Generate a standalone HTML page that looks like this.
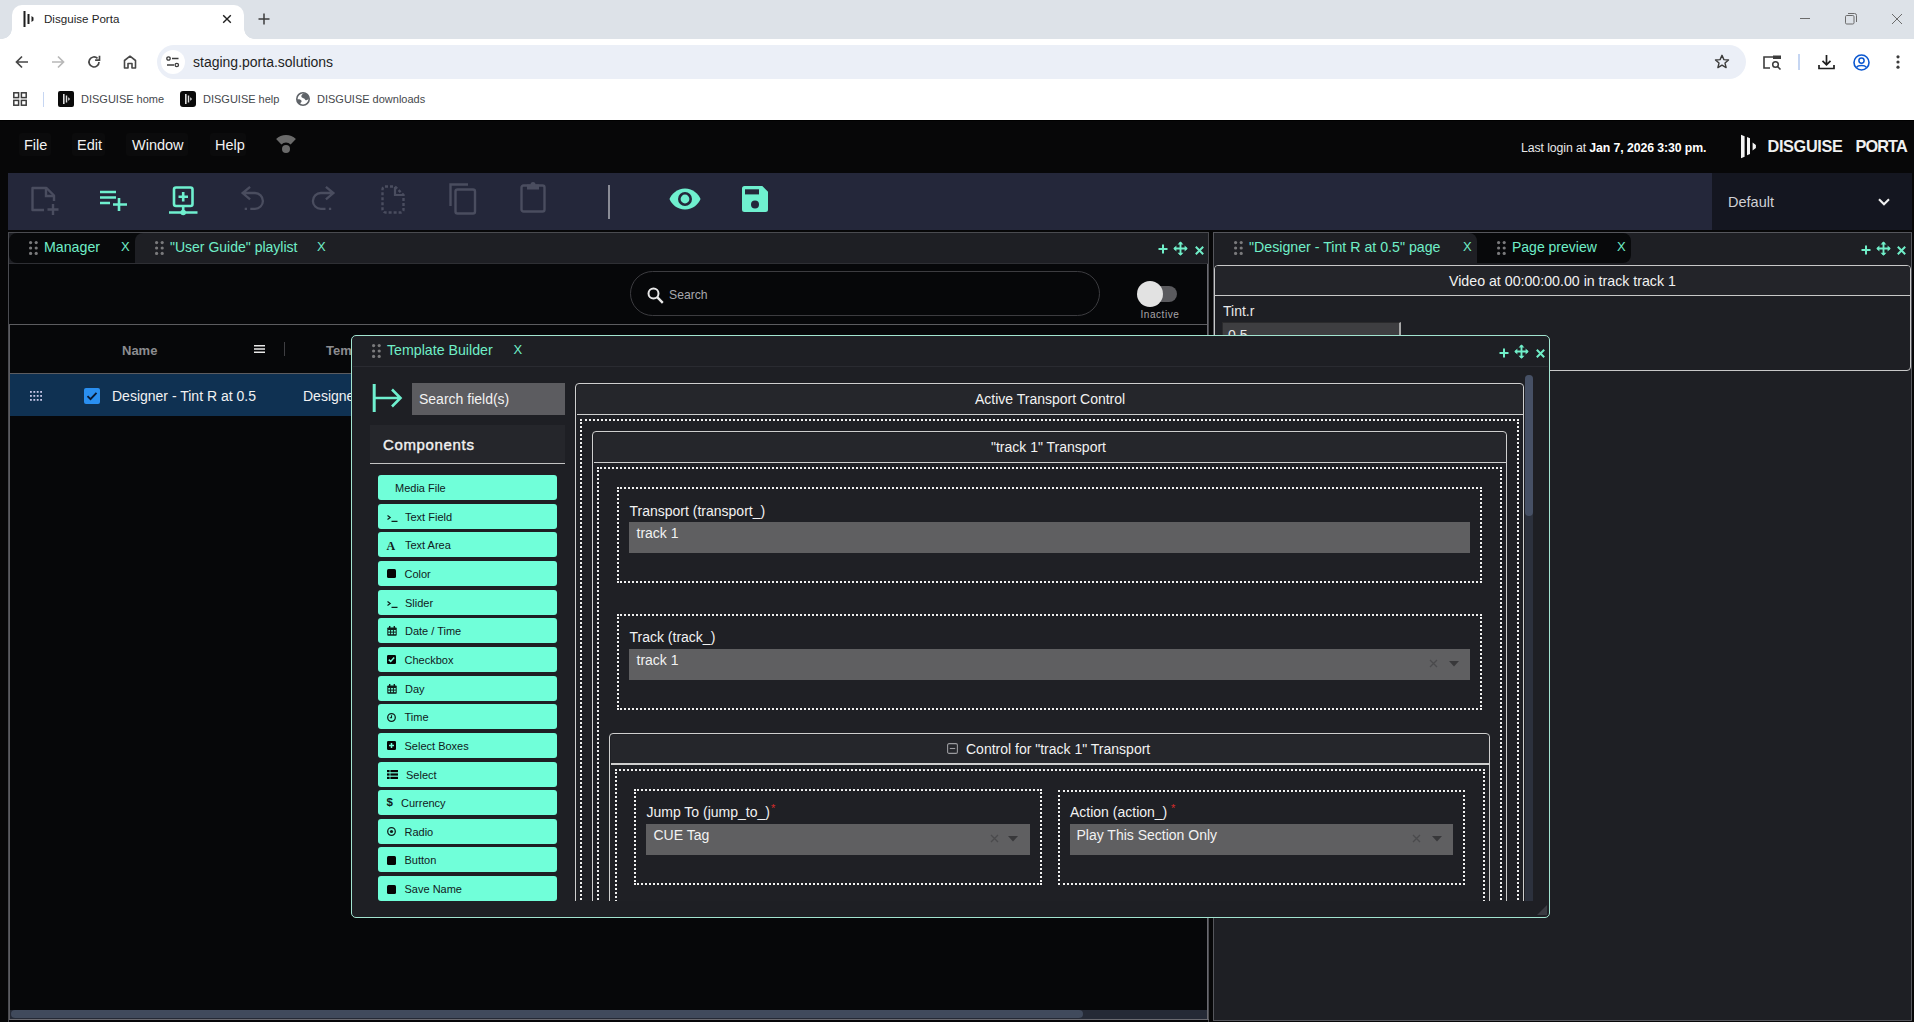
<!DOCTYPE html>
<html><head><meta charset="utf-8">
<style>
*{box-sizing:border-box;margin:0;padding:0}
html,body{width:1914px;height:1022px;overflow:hidden;background:#060709;font-family:"Liberation Sans",sans-serif}
.a{position:absolute}
.t{position:absolute;white-space:nowrap;line-height:1}
svg{position:absolute;overflow:visible}
</style></head><body>
<!-- ============ CHROME ============ -->
<div class="a" style="left:0;top:0;width:1914px;height:39px;background:#dde2e8"></div>
<div class="a" style="left:12px;top:5px;width:232px;height:35px;background:#fff;border-radius:10px 10px 0 0"></div>
<div class="a" style="left:0;top:39px;width:1914px;height:81px;background:#fff"></div>

<!-- tab foot curves -->
<div class="a" style="left:2px;top:29px;width:10px;height:10px;background:radial-gradient(circle at 0 0,#dde2e8 9.5px,#fff 10px)"></div>
<div class="a" style="left:244px;top:29px;width:10px;height:10px;background:radial-gradient(circle at 100% 0,#dde2e8 9.5px,#fff 10px)"></div>

<!-- tab icon -->
<svg style="left:23px;top:11px" width="12" height="16" viewBox="0 0 12 16"><rect x="0.5" y="0" width="2" height="16" fill="#1f1f1f"/><rect x="4.5" y="3" width="2" height="10" fill="#1f1f1f"/><path d="M8.5 5 L10.5 6.5 V9.5 L8.5 11 Z" fill="#1f1f1f"/></svg>
<div class="t" style="left:44px;top:13px;font-size:11.6px;color:#1f1f1f">Disguise Porta</div>
<svg style="left:222px;top:14px" width="10" height="10" viewBox="0 0 10 10"><path d="M1.2 1.2L8.8 8.8M8.8 1.2L1.2 8.8" stroke="#1f1f1f" stroke-width="1.4"/></svg>
<svg style="left:258px;top:13px" width="12" height="12" viewBox="0 0 12 12"><path d="M6 0.5V11.5M0.5 6H11.5" stroke="#3c3c3c" stroke-width="1.5"/></svg>
<!-- window controls -->
<div class="a" style="left:1800px;top:18px;width:10px;height:1px;background:#6b6b6b"></div>
<svg style="left:1845px;top:13px" width="12" height="12" viewBox="0 0 12 12"><rect x="0.5" y="2.5" width="8.5" height="8.5" rx="1.2" fill="none" stroke="#6b6b6b" stroke-width="1"/><path d="M3 0.5H9.5a2 2 0 0 1 2 2V9" fill="none" stroke="#6b6b6b" stroke-width="1"/></svg>
<svg style="left:1892px;top:14px" width="10" height="10" viewBox="0 0 10 10"><path d="M0 0L10 10M10 0L0 10" stroke="#6b6b6b" stroke-width="1"/></svg>
<!-- nav -->
<svg style="left:15px;top:55px" width="14" height="14" viewBox="0 0 14 14"><path d="M13 7H2M7 1.5L1.5 7L7 12.5" fill="none" stroke="#474747" stroke-width="1.7"/></svg>
<svg style="left:51px;top:55px" width="14" height="14" viewBox="0 0 14 14"><path d="M1 7H12M7 1.5L12.5 7L7 12.5" fill="none" stroke="#b8b8b8" stroke-width="1.7"/></svg>
<svg style="left:87px;top:55px" width="14" height="14" viewBox="0 0 14 14"><path d="M12 7A5 5 0 1 1 10.5 3.4" fill="none" stroke="#474747" stroke-width="1.7"/><path d="M12.5 0.8V5.2H8.1" fill="none" stroke="#474747" stroke-width="1.7"/></svg>
<svg style="left:123px;top:55px" width="14" height="14" viewBox="0 0 14 14"><path d="M1.5 13V5.5L7 1.2L12.5 5.5V13H9V8.5H5V13Z" fill="none" stroke="#474747" stroke-width="1.6" stroke-linejoin="round"/></svg>
<!-- omnibox -->
<div class="a" style="left:157px;top:45px;width:1589px;height:34px;background:#ebeff7;border-radius:17px"></div>
<div class="a" style="left:161px;top:50px;width:24px;height:24px;background:#fff;border-radius:12px"></div>
<svg style="left:166px;top:56px" width="14" height="12" viewBox="0 0 14 12"><circle cx="2.5" cy="2.5" r="1.7" fill="none" stroke="#3c3c3c" stroke-width="1.3"/><path d="M6 2.5H12.5M1 9H8" stroke="#3c3c3c" stroke-width="1.3"/><circle cx="10.8" cy="9" r="1.7" fill="none" stroke="#3c3c3c" stroke-width="1.3"/></svg>
<div class="t" style="left:193px;top:55px;font-size:14px;color:#1f1f1f">staging.porta.solutions</div>
<svg style="left:1714px;top:54px" width="16" height="16" viewBox="0 0 16 16"><path d="M8 1.3L9.9 5.6L14.5 6L11 9.1L12.1 13.6L8 11.2L3.9 13.6L5 9.1L1.5 6L6.1 5.6Z" fill="none" stroke="#3c3c3c" stroke-width="1.4" stroke-linejoin="round"/></svg>
<!-- right icons -->
<svg style="left:1763px;top:55px" width="19" height="15" viewBox="0 0 19 15"><path d="M10 2H1V13H7" fill="none" stroke="#3c3c3c" stroke-width="1.6"/><rect x="10" y="0.5" width="8" height="3.5" fill="#3c3c3c"/><circle cx="12.5" cy="9.5" r="2.8" fill="none" stroke="#3c3c3c" stroke-width="1.5"/><path d="M14.5 11.5L17.5 14.5" stroke="#3c3c3c" stroke-width="1.6"/></svg>
<div class="a" style="left:1798px;top:54px;width:2px;height:16px;background:#c6d6f2"></div>
<svg style="left:1818px;top:54px" width="17" height="16" viewBox="0 0 17 16"><path d="M8.5 1V10.5M4.5 6.8L8.5 10.8L12.5 6.8" fill="none" stroke="#1f1f1f" stroke-width="1.7"/><path d="M1 11V14.5H16V11" fill="none" stroke="#1f1f1f" stroke-width="1.7"/></svg>
<svg style="left:1853px;top:54px" width="17" height="17" viewBox="0 0 17 17"><circle cx="8.5" cy="8.5" r="7.5" fill="none" stroke="#0b57d0" stroke-width="1.6"/><circle cx="8.5" cy="6.6" r="2.6" fill="none" stroke="#0b57d0" stroke-width="1.5"/><path d="M3.6 13.4C5.2 11 11.8 11 13.4 13.4" fill="none" stroke="#0b57d0" stroke-width="1.5"/></svg>
<svg style="left:1896px;top:55px" width="4" height="14" viewBox="0 0 4 14"><circle cx="2" cy="1.8" r="1.6" fill="#3c3c3c"/><circle cx="2" cy="7" r="1.6" fill="#3c3c3c"/><circle cx="2" cy="12.2" r="1.6" fill="#3c3c3c"/></svg>
<!-- bookmarks -->
<svg style="left:13px;top:92px" width="14" height="14" viewBox="0 0 14 14"><rect x="0.8" y="0.8" width="4.8" height="4.8" fill="none" stroke="#3c3c3c" stroke-width="1.5"/><rect x="8.4" y="0.8" width="4.8" height="4.8" fill="none" stroke="#3c3c3c" stroke-width="1.5"/><rect x="0.8" y="8.4" width="4.8" height="4.8" fill="none" stroke="#3c3c3c" stroke-width="1.5"/><rect x="8.4" y="8.4" width="4.8" height="4.8" fill="none" stroke="#3c3c3c" stroke-width="1.5"/></svg>
<div class="a" style="left:43px;top:92px;width:1px;height:15px;background:#c6d6f2"></div>
<div class="a" style="left:58px;top:91px;width:16px;height:16px;background:#0a0a0a;border-radius:2px"></div>
<svg style="left:58px;top:91px" width="16" height="16" viewBox="0 0 16 16"><rect x="5" y="3" width="1.6" height="10" fill="#ddd"/><rect x="7.8" y="4.5" width="1.4" height="7" fill="#ddd"/><path d="M10.2 6.2L11.6 7.2V8.8L10.2 9.8Z" fill="#ddd"/></svg>
<div class="t" style="left:81px;top:93.5px;font-size:11px;color:#45484c">DISGUISE home</div>
<div class="a" style="left:180px;top:91px;width:16px;height:16px;background:#0a0a0a;border-radius:3px"></div>
<svg style="left:180px;top:91px" width="16" height="16" viewBox="0 0 16 16"><rect x="5" y="3" width="1.6" height="10" fill="#ddd"/><rect x="7.8" y="4.5" width="1.4" height="7" fill="#ddd"/><path d="M10.2 6.2L11.6 7.2V8.8L10.2 9.8Z" fill="#ddd"/></svg>
<div class="t" style="left:203px;top:93.5px;font-size:11px;color:#45484c">DISGUISE help</div>
<svg style="left:296px;top:92px" width="14" height="14" viewBox="0 0 14 14"><circle cx="7" cy="7" r="6.2" fill="none" stroke="#5f6368" stroke-width="1.6"/><path d="M7.5 1.2C5.8 2.2 4.8 4 5.6 5.2C6.5 6.4 8.2 5.8 9 7.4C9.6 8.4 10.6 8.6 11.6 7.8L13 6.2A6.2 6.2 0 0 0 7.5 1.2Z" fill="#5f6368"/><path d="M1 7.4C2.6 7 4.4 7.3 5.4 8.6C6 9.6 5.2 10.6 4.2 11.2L4.6 12.8A6.2 6.2 0 0 1 1 7.4Z" fill="#5f6368"/></svg>
<div class="t" style="left:317px;top:93.5px;font-size:11px;color:#45484c">DISGUISE downloads</div>

<!-- ============ APP ============ -->
<div class="a" style="left:0;top:120px;width:1914px;height:902px;background:#070708"></div><div class="a" style="left:0;top:120px;width:1914px;height:1px;background:#000"></div>
<!-- menu -->
<div class="a" style="left:19px;top:133px;width:32px;height:23px;border-radius:3px;background:#0b0b0c"></div>
<div class="a" style="left:72px;top:133px;width:33px;height:23px;border-radius:3px;background:#0b0b0c"></div>
<div class="a" style="left:126px;top:133px;width:62px;height:23px;border-radius:3px;background:#0b0b0c"></div>
<div class="a" style="left:210px;top:133px;width:36px;height:23px;border-radius:3px;background:#0b0b0c"></div>
<div class="t" style="left:24px;top:138px;font-size:14.5px;color:#f2f2f2">File</div>
<div class="t" style="left:77px;top:138px;font-size:14.5px;color:#f2f2f2">Edit</div>
<div class="t" style="left:132px;top:138px;font-size:14.5px;color:#f2f2f2">Window</div>
<div class="t" style="left:215px;top:138px;font-size:14.5px;color:#f2f2f2">Help</div>
<svg style="left:276px;top:134px" width="20" height="20" viewBox="0 0 20 20"><path d="M0.1 5.1A14 14 0 0 1 19.9 5.1L14.6 10.4A6.5 6.5 0 0 0 5.4 10.4Z" fill="#6a6a6a"/><circle cx="10" cy="15" r="4" fill="#6a6a6a"/></svg>
<div class="t" style="left:1521px;top:141.6px;font-size:12.3px;color:#e8e8e8;letter-spacing:-0.1px">Last login at <b style="color:#fff">Jan 7, 2026 3:30 pm.</b></div>
<svg style="left:1740px;top:134px" width="17" height="24" viewBox="0 0 17 24"><path d="M1 0.8L4.6 2.2V22.8L1 24.2Z M7 3L10 4.3V19.9L7 21.2Z M12.6 8.4L15.9 11V13.9L12.6 16.6Z" fill="#f2f2f2"/></svg>
<div class="t" style="left:1767.5px;top:138px;font-size:16.3px;font-weight:700;color:#f0f0f0;letter-spacing:-0.35px">DISGUISE</div>
<div class="t" style="left:1855.5px;top:138px;font-size:16.3px;font-weight:700;color:#f0f0f0;letter-spacing:-0.9px">PORTA</div>

<!-- toolbar -->
<div class="a" style="left:8px;top:173px;width:1704px;height:57px;background:#24273a"></div>
<div class="a" style="left:1712px;top:173px;width:200px;height:57px;background:#141620"></div>
<div class="t" style="left:1728px;top:195px;font-size:14.5px;color:#d0d0d4">Default</div>
<svg style="left:1878px;top:198px" width="12" height="8" viewBox="0 0 12 8"><path d="M1 1.2L6 6.2L11 1.2" fill="none" stroke="#f0f0f0" stroke-width="2.1"/></svg>

<!-- toolbar icons (disabled color #4d5063, active #6ff0cf) -->
<svg style="left:30px;top:186px" width="30" height="30" viewBox="0 0 30 30"><path d="M14 24H2.5V2H16.5L24 9.5V15" fill="none" stroke="#4a4d5f" stroke-width="2.4" stroke-linejoin="round"/><path d="M16 2.5V10H23.5" fill="none" stroke="#4a4d5f" stroke-width="2.4"/><path d="M23 18V29M17.5 23.5H28.5" stroke="#4a4d5f" stroke-width="2.4"/></svg>
<svg style="left:100px;top:190px" width="28" height="21" viewBox="0 0 28 21"><path d="M0 2H16M0 7.5H16M0 13H10M19 8V21M13 14.5H27" stroke="#6ff0cf" stroke-width="2.6"/></svg>
<svg style="left:169px;top:186px" width="29" height="30" viewBox="0 0 29 30"><rect x="5" y="1.5" width="18.5" height="18.5" rx="2" fill="none" stroke="#6ff0cf" stroke-width="2.6"/><path d="M14.2 6V15.5M9.5 10.7H19" stroke="#6ff0cf" stroke-width="2.6"/><path d="M14.2 20V25.5M0 26.5H28.5" stroke="#6ff0cf" stroke-width="2.6"/><circle cx="14.2" cy="26.5" r="2.8" fill="#6ff0cf"/></svg>
<svg style="left:241px;top:186px" width="24" height="25" viewBox="0 0 24 25"><path d="M9.1 0.8L1.6 7L9.1 13.4M1.6 7H14A7.9 7.9 0 0 1 14 22.8H9.3" fill="none" stroke="#4a4d5f" stroke-width="2.3"/><rect x="3.7" y="21.7" width="2.3" height="2.3" fill="#4a4d5f"/></svg>
<svg style="left:311px;top:186px" width="24" height="25" viewBox="0 0 24 25"><path d="M14.9 0.8L22.4 7L14.9 13.4M22.4 7H9.8A7.9 7.9 0 0 0 9.8 22.8H14.5" fill="none" stroke="#4a4d5f" stroke-width="2.3"/><rect x="17.9" y="21.7" width="2.3" height="2.3" fill="#4a4d5f"/></svg>
<svg style="left:381px;top:185px" width="24" height="29" viewBox="0 0 24 29"><path d="M4 1.5H14L22.5 10V24.5A3 3 0 0 1 19.5 27.5H4.5A3 3 0 0 1 1.5 24.5V4.5A3 3 0 0 1 4 1.5Z" fill="none" stroke="#4a4d5f" stroke-width="2.4" stroke-dasharray="3 2"/><path d="M14 2V10H22" fill="none" stroke="#4a4d5f" stroke-width="2.2"/></svg>
<svg style="left:449px;top:183px" width="28" height="32" viewBox="0 0 28 32"><path d="M1.5 23V1.5H19" fill="none" stroke="#4a4d5f" stroke-width="2.4"/><rect x="6.5" y="6.5" width="19.5" height="24" rx="2" fill="none" stroke="#4a4d5f" stroke-width="2.4"/></svg>
<svg style="left:520px;top:182px" width="26" height="31" viewBox="0 0 26 31"><rect x="1.5" y="3.5" width="23" height="26" rx="2" fill="none" stroke="#4a4d5f" stroke-width="2.4"/><path d="M7 2.5H19V7.5H7Z" fill="#4a4d5f"/><circle cx="13" cy="2.5" r="2.5" fill="#4a4d5f"/></svg>
<div class="a" style="left:608px;top:185px;width:2px;height:34px;background:#8a8c96"></div>
<svg style="left:669px;top:188px" width="32" height="22" viewBox="0 0 32 22"><path d="M16 0.5C8 0.5 2.5 6 0.5 11C2.5 16 8 21.5 16 21.5C24 21.5 29.5 16 31.5 11C29.5 6 24 0.5 16 0.5Z" fill="#6ff0cf"/><circle cx="16" cy="11" r="7" fill="#24273a"/><circle cx="16" cy="11" r="4.4" fill="#6ff0cf"/></svg>
<svg style="left:742px;top:186px" width="26" height="26" viewBox="0 0 26 26"><path d="M2.5 0H20.3L26 5.8V23.5A2.5 2.5 0 0 1 23.5 26H2.5A2.5 2.5 0 0 1 0 23.5V2.5A2.5 2.5 0 0 1 2.5 0Z" fill="#6ff0cf"/><rect x="3" y="3.3" width="14" height="5.1" fill="#24273a"/><circle cx="13" cy="18.6" r="4" fill="#24273a"/></svg>

<!-- ============ LEFT PANEL ============ -->
<div class="a" style="left:8px;top:232px;width:1201px;height:790px;background:#060709;border:1px solid #4a4b50;border-bottom:none"></div>
<div class="a" style="left:9px;top:233px;width:1199px;height:31px;background:#1e1f24"></div>
<div class="a" style="left:9px;top:233px;width:140px;height:30px;background:#08090b;border-radius:8px 0 0 8px"></div><div class="a" style="left:135px;top:233px;width:1073px;height:30px;background:#1e1f24;border-radius:8px 0 0 0"></div>
<div class="a" style="left:9px;top:263px;width:1199px;height:1px;background:#2e2f34"></div>

<!-- left tabs -->
<svg style="left:29px;top:241px" width="9" height="14" viewBox="0 0 9 14"><g fill="#7a7a7c"><circle cx="1.6" cy="1.6" r="1.6"/><circle cx="7.2" cy="1.6" r="1.6"/><circle cx="1.6" cy="7" r="1.6"/><circle cx="7.2" cy="7" r="1.6"/><circle cx="1.6" cy="12.4" r="1.6"/><circle cx="7.2" cy="12.4" r="1.6"/></g></svg>
<div class="t" style="left:44px;top:240.3px;font-size:14.2px;color:#70eec8">Manager</div>
<div class="t" style="left:121px;top:240.3px;font-size:13px;color:#70eec8">X</div>
<svg style="left:155px;top:241px" width="9" height="14" viewBox="0 0 9 14"><g fill="#7a7a7c"><circle cx="1.6" cy="1.6" r="1.6"/><circle cx="7.2" cy="1.6" r="1.6"/><circle cx="1.6" cy="7" r="1.6"/><circle cx="7.2" cy="7" r="1.6"/><circle cx="1.6" cy="12.4" r="1.6"/><circle cx="7.2" cy="12.4" r="1.6"/></g></svg>
<div class="t" style="left:170px;top:240.3px;font-size:14px;color:#70eec8">"User Guide" playlist</div>
<div class="t" style="left:317px;top:240.3px;font-size:13px;color:#70eec8">X</div>
<!-- left panel top-right icons -->
<svg style="left:1158px;top:244px" width="10" height="10" viewBox="0 0 10 10"><path d="M5 0.5V9.5M0.5 5H9.5" stroke="#70eec8" stroke-width="2"/></svg>
<svg style="left:1173px;top:241px" width="15" height="15" viewBox="0 0 16 16"><path d="M8 1V15M1 8H15" stroke="#70eec8" stroke-width="2"/><path d="M4.8 3.6L8 0.4L11.2 3.6ZM4.8 12.4L8 15.6L11.2 12.4ZM3.6 4.8L0.4 8L3.6 11.2ZM12.4 4.8L15.6 8L12.4 11.2Z" fill="#70eec8"/></svg>
<svg style="left:1195px;top:246px" width="9" height="9" viewBox="0 0 9 9"><path d="M0.8 0.8L8.2 8.2M8.2 0.8L0.8 8.2" stroke="#70eec8" stroke-width="2"/></svg>

<!-- search -->
<div class="a" style="left:630px;top:271px;width:470px;height:45px;border:1px solid #3c3c40;border-radius:23px;background:#060709"></div>
<svg style="left:647px;top:287px" width="17" height="17" viewBox="0 0 17 17"><circle cx="6.5" cy="6.5" r="5" fill="none" stroke="#e8e8e8" stroke-width="2"/><path d="M10.2 10.2L15.8 15.8" stroke="#e8e8e8" stroke-width="2.4"/></svg>
<div class="t" style="left:669px;top:289px;font-size:12.2px;color:#a8a8ac">Search</div>
<!-- toggle -->
<div class="a" style="left:1140px;top:286px;width:37px;height:16px;border-radius:8px;background:#5a5a5e"></div>
<div class="a" style="left:1137px;top:281px;width:26px;height:26px;border-radius:13px;background:#e2e2e2"></div>
<div class="t" style="left:1140.5px;top:309.5px;font-size:10px;color:#a6a6aa;letter-spacing:0.55px">Inactive</div>

<!-- table -->
<div class="a" style="left:9px;top:324px;width:1199px;height:1px;background:#5c5c60"></div>
<div class="a" style="left:9px;top:324px;width:1px;height:696px;background:#5c5c60"></div>
<div class="t" style="left:122px;top:344px;font-size:13px;font-weight:700;color:#8c8c90">Name</div>
<svg style="left:254px;top:345px" width="11" height="8" viewBox="0 0 11 8"><path d="M0 0.75H11M0 4H11M0 7.25H11" stroke="#e8e8e8" stroke-width="1.4"/></svg>
<div class="a" style="left:284px;top:342px;width:1px;height:14px;background:#3e3e42"></div>
<div class="t" style="left:326px;top:344px;font-size:13px;font-weight:700;color:#8c8c90">Template</div>
<div class="a" style="left:10px;top:373px;width:1198px;height:1px;background:#5c5c60"></div>
<div class="a" style="left:10px;top:374px;width:1198px;height:42px;background:#0f3152"></div>
<svg style="left:30px;top:391px" width="12" height="10" viewBox="0 0 12 10"><g fill="#c8c8e8"><rect x="0" y="0" width="1.8" height="1.8"/><rect x="3.4" y="0" width="1.8" height="1.8"/><rect x="6.8" y="0" width="1.8" height="1.8"/><rect x="10.2" y="0" width="1.8" height="1.8"/><rect x="0" y="4" width="1.8" height="1.8"/><rect x="3.4" y="4" width="1.8" height="1.8"/><rect x="6.8" y="4" width="1.8" height="1.8"/><rect x="10.2" y="4" width="1.8" height="1.8"/><rect x="0" y="8" width="1.8" height="1.8"/><rect x="3.4" y="8" width="1.8" height="1.8"/><rect x="6.8" y="8" width="1.8" height="1.8"/><rect x="10.2" y="8" width="1.8" height="1.8"/></g></svg>
<div class="a" style="left:84px;top:388px;width:16px;height:16px;border-radius:2px;background:#2a8ff0"></div>
<svg style="left:84px;top:388px" width="16" height="16" viewBox="0 0 16 16"><path d="M3.5 8.2L6.5 11.2L12.5 4.8" fill="none" stroke="#0b1a33" stroke-width="1.9"/></svg>
<div class="t" style="left:112px;top:389px;font-size:14px;color:#f2f2f2">Designer - Tint R at 0.5</div>
<div class="t" style="left:303px;top:389px;font-size:14px;color:#f2f2f2">Designer</div>
<!-- h scrollbar -->
<div class="a" style="left:10px;top:1010px;width:1198px;height:9px;background:#252a36"></div>
<div class="a" style="left:11px;top:1010px;width:1072px;height:8px;border-radius:4px;background:#404a5c"></div>
<div class="a" style="left:9px;top:1019px;width:1200px;height:1px;background:#6a6a70"></div>
<div class="a" style="left:1207px;top:264px;width:1px;height:756px;background:#6a6a70"></div>

<!-- ============ RIGHT PANEL ============ -->
<div class="a" style="left:1213px;top:232px;width:699px;height:789px;background:#1e1f24;border:1px solid #55565c"></div>
<div class="a" style="left:1467px;top:233px;width:164px;height:30px;background:#08090b;border-radius:0 8px 8px 0"></div>
<div class="a" style="left:1214px;top:233px;width:263px;height:30px;background:#1e1f24;border-radius:0 8px 0 0"></div>
<svg style="left:1234px;top:241px" width="9" height="14" viewBox="0 0 9 14"><g fill="#7a7a7c"><circle cx="1.6" cy="1.6" r="1.6"/><circle cx="7.2" cy="1.6" r="1.6"/><circle cx="1.6" cy="7" r="1.6"/><circle cx="7.2" cy="7" r="1.6"/><circle cx="1.6" cy="12.4" r="1.6"/><circle cx="7.2" cy="12.4" r="1.6"/></g></svg>
<div class="t" style="left:1249px;top:240.3px;font-size:14.2px;color:#70eec8">"Designer - Tint R at 0.5" page</div>
<div class="t" style="left:1463px;top:240.3px;font-size:13px;color:#70eec8">X</div>
<svg style="left:1497px;top:241px" width="9" height="14" viewBox="0 0 9 14"><g fill="#7a7a7c"><circle cx="1.6" cy="1.6" r="1.6"/><circle cx="7.2" cy="1.6" r="1.6"/><circle cx="1.6" cy="7" r="1.6"/><circle cx="7.2" cy="7" r="1.6"/><circle cx="1.6" cy="12.4" r="1.6"/><circle cx="7.2" cy="12.4" r="1.6"/></g></svg>
<div class="t" style="left:1512px;top:240.3px;font-size:14px;color:#70eec8">Page preview</div>
<div class="t" style="left:1617px;top:240.3px;font-size:13px;color:#70eec8">X</div>
<svg style="left:1861px;top:245px" width="10" height="10" viewBox="0 0 10 10"><path d="M5 0.5V9.5M0.5 5H9.5" stroke="#70eec8" stroke-width="2"/></svg>
<svg style="left:1876px;top:241px" width="15" height="15" viewBox="0 0 16 16"><path d="M8 1V15M1 8H15" stroke="#70eec8" stroke-width="2"/><path d="M4.8 3.6L8 0.4L11.2 3.6ZM4.8 12.4L8 15.6L11.2 12.4ZM3.6 4.8L0.4 8L3.6 11.2ZM12.4 4.8L15.6 8L12.4 11.2Z" fill="#70eec8"/></svg>
<svg style="left:1897px;top:246px" width="9" height="9" viewBox="0 0 9 9"><path d="M0.8 0.8L8.2 8.2M8.2 0.8L0.8 8.2" stroke="#70eec8" stroke-width="2"/></svg>
<!-- preview box -->
<div class="a" style="left:1214px;top:265px;width:697px;height:106px;border:1.5px solid #c8c8c8;border-radius:4px;background:#1e1f24"></div>
<div class="a" style="left:1215px;top:266px;width:695px;height:29px;background:#232429;border-radius:3px 3px 0 0"></div>
<div class="a" style="left:1215px;top:295px;width:695px;height:1px;background:#c8c8c8"></div>
<div class="t" style="left:1449px;top:274px;font-size:14.2px;color:#f2f2f2">Video at 00:00:00.00 in track track 1</div>
<div class="t" style="left:1223px;top:304px;font-size:14px;color:#e8e8e8">Tint.r</div>
<div class="a" style="left:1222px;top:321.5px;width:179px;height:30px;background:#3e3e41;border:1px solid #2a2a2c;border-right:2px solid #a8a8a8"></div>
<div class="t" style="left:1228px;top:328px;font-size:14px;color:#e8e8e8">0.5</div>

<!-- ============ TEMPLATE BUILDER ============ -->
<div class="a" style="left:351px;top:335px;width:1199px;height:583px;border:1.5px solid #a2e4d0;border-radius:5px;background:#1e1f24"></div>
<div class="a" style="left:353px;top:366px;width:1195px;height:1px;background:#2a2b31"></div>
<svg style="left:372px;top:344px" width="9" height="14" viewBox="0 0 9 14"><g fill="#7a7a7c"><circle cx="1.6" cy="1.6" r="1.6"/><circle cx="7.2" cy="1.6" r="1.6"/><circle cx="1.6" cy="7" r="1.6"/><circle cx="7.2" cy="7" r="1.6"/><circle cx="1.6" cy="12.4" r="1.6"/><circle cx="7.2" cy="12.4" r="1.6"/></g></svg>
<div class="t" style="left:387px;top:342.8px;font-size:14.2px;color:#70eec8">Template Builder</div>
<div class="t" style="left:513.5px;top:343px;font-size:13px;color:#70eec8">X</div>
<svg style="left:1499px;top:348px" width="10" height="10" viewBox="0 0 10 10"><path d="M5 0.5V9.5M0.5 5H9.5" stroke="#70eec8" stroke-width="2"/></svg>
<svg style="left:1514px;top:344px" width="15" height="15" viewBox="0 0 16 16"><path d="M8 1V15M1 8H15" stroke="#70eec8" stroke-width="2"/><path d="M4.8 3.6L8 0.4L11.2 3.6ZM4.8 12.4L8 15.6L11.2 12.4ZM3.6 4.8L0.4 8L3.6 11.2ZM12.4 4.8L15.6 8L12.4 11.2Z" fill="#70eec8"/></svg>
<svg style="left:1536px;top:349px" width="9" height="9" viewBox="0 0 9 9"><path d="M0.8 0.8L8.2 8.2M8.2 0.8L0.8 8.2" stroke="#70eec8" stroke-width="2"/></svg>
<!-- resize handle -->
<svg style="left:1537px;top:905px" width="10" height="10" viewBox="0 0 10 10"><path d="M10 0L10 10L0 10Z" fill="#3a3b42"/></svg>

<!-- left column -->
<svg style="left:372px;top:384px" width="30" height="28" viewBox="0 0 30 28"><path d="M2.2 0V28" stroke="#6ff0cf" stroke-width="3"/><path d="M2 14H28M20 5.5L28.5 14L20 22.5" fill="none" stroke="#6ff0cf" stroke-width="2.6"/></svg>
<div class="a" style="left:412px;top:383px;width:153px;height:32px;background:#5c5c60"></div>
<div class="t" style="left:419px;top:391.5px;font-size:14px;color:#f2f2f2">Search field(s)</div>
<div class="a" style="left:370px;top:425px;width:195px;height:38px;background:#25262b"></div>
<div class="a" style="left:370px;top:462.5px;width:195px;height:1.5px;background:#c4c4c4"></div>
<div class="t" style="left:383px;top:437.3px;font-size:15px;color:#f2f2f2;letter-spacing:0.65px;-webkit-text-stroke:0.4px #f2f2f2">Components</div>
<div class="a" style="left:378px;top:475.00px;width:179px;height:25px;border-radius:3px;background:#70ffd9"></div>
<div class="t" style="left:395px;top:483.00px;font-size:11px;color:#10201c">Media File</div>
<div class="a" style="left:378px;top:503.65px;width:179px;height:25px;border-radius:3px;background:#70ffd9"></div>
<svg style="left:387px;top:512.65px" width="11" height="9" viewBox="0 0 11 9"><path d="M0.5 2.5L3.2 4.5L0.5 6.5M4.5 8.3H10.5" fill="none" stroke="#10201c" stroke-width="1.2"/></svg>
<div class="t" style="left:405px;top:511.65px;font-size:11px;color:#10201c">Text Field</div>
<div class="a" style="left:378px;top:532.30px;width:179px;height:25px;border-radius:3px;background:#70ffd9"></div>
<div class="t" style="left:386.5px;top:539.80px;font-family:'Liberation Serif';font-weight:700;font-size:12px;color:#10201c">A</div>
<div class="t" style="left:405px;top:540.30px;font-size:11px;color:#10201c">Text Area</div>
<div class="a" style="left:378px;top:560.95px;width:179px;height:25px;border-radius:3px;background:#70ffd9"></div>
<div class="a" style="left:387px;top:569.45px;width:9px;height:9px;border-radius:1.5px;background:#060606"></div>
<div class="t" style="left:404.5px;top:568.95px;font-size:11px;color:#10201c">Color</div>
<div class="a" style="left:378px;top:589.60px;width:179px;height:25px;border-radius:3px;background:#70ffd9"></div>
<svg style="left:387px;top:598.60px" width="11" height="9" viewBox="0 0 11 9"><path d="M0.5 2.5L3.2 4.5L0.5 6.5M4.5 8.3H10.5" fill="none" stroke="#10201c" stroke-width="1.2"/></svg>
<div class="t" style="left:405px;top:597.60px;font-size:11px;color:#10201c">Slider</div>
<div class="a" style="left:378px;top:618.25px;width:179px;height:25px;border-radius:3px;background:#70ffd9"></div>
<svg style="left:387px;top:626.25px" width="10" height="10" viewBox="0 0 10 10"><rect x="0.3" y="1.5" width="9.4" height="8.3" rx="0.8" fill="#10201c"/><g fill="#70ffd9"><rect x="1.3" y="4" width="1.8" height="1.6"/><rect x="4.1" y="4" width="1.8" height="1.6"/><rect x="6.9" y="4" width="1.8" height="1.6"/><rect x="1.3" y="6.6" width="1.8" height="1.6"/><rect x="4.1" y="6.6" width="1.8" height="1.6"/><rect x="6.9" y="6.6" width="1.8" height="1.6"/></g><rect x="2" y="0" width="1.4" height="2.5" fill="#10201c"/><rect x="6.6" y="0" width="1.4" height="2.5" fill="#10201c"/></svg>
<div class="t" style="left:405px;top:626.25px;font-size:11px;color:#10201c">Date / Time</div>
<div class="a" style="left:378px;top:646.90px;width:179px;height:25px;border-radius:3px;background:#70ffd9"></div>
<svg style="left:387px;top:655.20px" width="9" height="9" viewBox="0 0 9 9"><rect x="0" y="0" width="9" height="9" rx="1.2" fill="#060606"/><path d="M1.8 4.6L3.7 6.4L7.2 2.6" fill="none" stroke="#70ffd9" stroke-width="1.5"/></svg>
<div class="t" style="left:404.5px;top:654.90px;font-size:11px;color:#10201c">Checkbox</div>
<div class="a" style="left:378px;top:675.55px;width:179px;height:25px;border-radius:3px;background:#70ffd9"></div>
<svg style="left:387px;top:683.55px" width="10" height="10" viewBox="0 0 10 10"><rect x="0.3" y="1.5" width="9.4" height="8.3" rx="0.8" fill="#10201c"/><g fill="#70ffd9"><rect x="1.3" y="4" width="1.8" height="1.6"/><rect x="4.1" y="4" width="1.8" height="1.6"/><rect x="6.9" y="4" width="1.8" height="1.6"/><rect x="1.3" y="6.6" width="1.8" height="1.6"/><rect x="4.1" y="6.6" width="1.8" height="1.6"/><rect x="6.9" y="6.6" width="1.8" height="1.6"/></g><rect x="2" y="0" width="1.4" height="2.5" fill="#10201c"/><rect x="6.6" y="0" width="1.4" height="2.5" fill="#10201c"/></svg>
<div class="t" style="left:405px;top:683.55px;font-size:11px;color:#10201c">Day</div>
<div class="a" style="left:378px;top:704.20px;width:179px;height:25px;border-radius:3px;background:#70ffd9"></div>
<svg style="left:387px;top:712.50px" width="9" height="9" viewBox="0 0 9 9"><circle cx="4.5" cy="4.5" r="3.8" fill="none" stroke="#10201c" stroke-width="1.3"/><path d="M4.5 2.2V4.7H2.8" fill="none" stroke="#10201c" stroke-width="1.1"/></svg>
<div class="t" style="left:404.5px;top:712.20px;font-size:11px;color:#10201c">Time</div>
<div class="a" style="left:378px;top:732.85px;width:179px;height:25px;border-radius:3px;background:#70ffd9"></div>
<svg style="left:387px;top:741.15px" width="9" height="9" viewBox="0 0 9 9"><rect x="0" y="0" width="9" height="9" rx="1.3" fill="#060606"/><path d="M4.5 2V7M2 4.5H7" stroke="#70ffd9" stroke-width="1.5"/></svg>
<div class="t" style="left:404.5px;top:740.85px;font-size:11px;color:#10201c">Select Boxes</div>
<div class="a" style="left:378px;top:761.50px;width:179px;height:25px;border-radius:3px;background:#70ffd9"></div>
<svg style="left:387px;top:770.00px" width="11" height="9" viewBox="0 0 11 9"><g fill="#060606"><rect x="0" y="0" width="2.6" height="2.2"/><rect x="3.4" y="0" width="7.6" height="2.2"/><rect x="0" y="3.4" width="2.6" height="2.2"/><rect x="3.4" y="3.4" width="7.6" height="2.2"/><rect x="0" y="6.8" width="2.6" height="2.2"/><rect x="3.4" y="6.8" width="7.6" height="2.2"/></g></svg>
<div class="t" style="left:406px;top:769.50px;font-size:11px;color:#10201c">Select</div>
<div class="a" style="left:378px;top:790.15px;width:179px;height:25px;border-radius:3px;background:#70ffd9"></div>
<div class="t" style="left:386.5px;top:797.15px;font-size:11.5px;font-weight:700;color:#10201c">$</div>
<div class="t" style="left:401px;top:798.15px;font-size:11px;color:#10201c">Currency</div>
<div class="a" style="left:378px;top:818.80px;width:179px;height:25px;border-radius:3px;background:#70ffd9"></div>
<svg style="left:387px;top:827.10px" width="9" height="9" viewBox="0 0 9 9"><circle cx="4.5" cy="4.5" r="3.8" fill="none" stroke="#10201c" stroke-width="1.3"/><circle cx="4.5" cy="4.5" r="1.6" fill="#10201c"/></svg>
<div class="t" style="left:404.5px;top:826.80px;font-size:11px;color:#10201c">Radio</div>
<div class="a" style="left:378px;top:847.45px;width:179px;height:25px;border-radius:3px;background:#70ffd9"></div>
<div class="a" style="left:387px;top:855.95px;width:9px;height:9px;border-radius:1.5px;background:#060606"></div>
<div class="t" style="left:404.5px;top:855.45px;font-size:11px;color:#10201c">Button</div>
<div class="a" style="left:378px;top:876.10px;width:179px;height:25px;border-radius:3px;background:#70ffd9"></div>
<div class="a" style="left:387px;top:884.60px;width:9px;height:9px;border-radius:1.5px;background:#060606"></div>
<div class="t" style="left:404.5px;top:884.10px;font-size:11px;color:#10201c">Save Name</div>

<!-- ============ FORM (clipped) ============ -->
<div class="a" style="left:570px;top:370px;width:970px;height:530.5px;overflow:hidden">
 <div class="a" style="left:-570px;top:-370px;width:1914px;height:1022px">
  <!-- scrollbar -->
  <div class="a" style="left:1524.5px;top:375px;width:8.5px;height:600px;border-radius:4px;background:#2c313d"></div>
  <div class="a" style="left:1524.5px;top:375px;width:8.5px;height:141px;border-radius:4px;background:#465065"></div>
  <!-- outer box -->
  <div class="a" style="left:575px;top:383px;width:949px;height:700px;border:1.5px solid #cfcfcf;border-radius:4px;background:#1f2025"></div>
  <div class="a" style="left:576.5px;top:384.5px;width:946px;height:29.5px;background:#25262b;border-radius:3px 3px 0 0"></div>
  <div class="a" style="left:576.5px;top:413.5px;width:946px;height:1.5px;background:#cfcfcf"></div>
  <div class="t" style="left:975px;top:391.8px;font-size:14px;color:#f2f2f2">Active Transport Control</div>
  <div class="a" style="left:580px;top:419px;width:939px;height:700px;border:2px dotted #f0f0f0"></div>
  <!-- inner box -->
  <div class="a" style="left:592px;top:431px;width:915px;height:700px;border:1.5px solid #cfcfcf;border-radius:4px;background:#1f2025"></div>
  <div class="a" style="left:593.5px;top:432.5px;width:912px;height:29.5px;background:#25262b;border-radius:3px 3px 0 0"></div>
  <div class="a" style="left:593.5px;top:461.5px;width:912px;height:1.5px;background:#cfcfcf"></div>
  <div class="t" style="left:991px;top:440.3px;font-size:14px;color:#f2f2f2">"track 1" Transport</div>
  <div class="a" style="left:597px;top:467px;width:905px;height:700px;border:2px dotted #f0f0f0"></div>
  <!-- field transport -->
  <div class="a" style="left:617px;top:487px;width:865px;height:96px;border:2px dotted #f0f0f0"></div>
  <div class="t" style="left:629.5px;top:503.5px;font-size:14px;color:#f2f2f2">Transport (transport_)</div>
  <div class="a" style="left:629px;top:521.5px;width:841px;height:31.5px;background:#5f5f61"></div>
  <div class="t" style="left:636.5px;top:526px;font-size:14px;color:#f2f2f2">track 1</div>
  <!-- field track -->
  <div class="a" style="left:617px;top:613.5px;width:865px;height:96px;border:2px dotted #f0f0f0"></div>
  <div class="t" style="left:629.5px;top:630.4px;font-size:14px;color:#f2f2f2">Track (track_)</div>
  <div class="a" style="left:629px;top:648.5px;width:841px;height:31px;background:#5f5f61"></div>
  <div class="t" style="left:636.5px;top:653px;font-size:14px;color:#f2f2f2">track 1</div>
  <svg style="left:1429px;top:659px" width="9" height="9" viewBox="0 0 9 9"><path d="M1 1L8 8M8 1L1 8" stroke="#4a4a4c" stroke-width="1.3"/></svg>
  <svg style="left:1449px;top:661px" width="10" height="6" viewBox="0 0 10 6"><path d="M0 0H10L5 5.5Z" fill="#38383a"/></svg>
  <!-- control box -->
  <div class="a" style="left:609px;top:733px;width:881px;height:400px;border:1.5px solid #cfcfcf;border-radius:4px;background:#1f2025"></div>
  <div class="a" style="left:610.5px;top:734.5px;width:878px;height:28.5px;background:#25262b;border-radius:3px 3px 0 0"></div>
  <div class="a" style="left:610.5px;top:763px;width:878px;height:1.5px;background:#cfcfcf"></div>
  <svg style="left:947px;top:743px" width="11" height="11" viewBox="0 0 11 11"><rect x="0.6" y="0.6" width="9.8" height="9.8" rx="1.5" fill="none" stroke="#9a9a9e" stroke-width="1.1"/><path d="M2.8 5.5H8.2" stroke="#9a9a9e" stroke-width="1.1"/></svg>
  <div class="t" style="left:966px;top:742.4px;font-size:14px;color:#f2f2f2">Control for "track 1" Transport</div>
  <div class="a" style="left:614.5px;top:769px;width:870px;height:400px;border:2px dotted #f0f0f0"></div>
  <!-- jump -->
  <div class="a" style="left:634px;top:789px;width:408px;height:96px;border:2px dotted #f0f0f0"></div>
  <div class="t" style="left:646.5px;top:805px;font-size:14px;color:#f2f2f2">Jump To (jump_to_)</div>
  <div class="t" style="left:771px;top:803px;font-size:11px;color:#d42b2b">*</div>
  <div class="a" style="left:646px;top:823.5px;width:384px;height:31px;background:#5f5f61"></div>
  <div class="t" style="left:653.5px;top:828px;font-size:14px;color:#f2f2f2">CUE Tag</div>
  <svg style="left:990px;top:834px" width="9" height="9" viewBox="0 0 9 9"><path d="M1 1L8 8M8 1L1 8" stroke="#4a4a4c" stroke-width="1.3"/></svg>
  <svg style="left:1008px;top:836px" width="10" height="6" viewBox="0 0 10 6"><path d="M0 0H10L5 5.5Z" fill="#38383a"/></svg>
  <!-- action -->
  <div class="a" style="left:1058px;top:790px;width:407px;height:95px;border:2px dotted #f0f0f0"></div>
  <div class="t" style="left:1070px;top:805px;font-size:14px;color:#f2f2f2">Action (action_)</div>
  <div class="t" style="left:1171px;top:803px;font-size:11px;color:#d42b2b">*</div>
  <div class="a" style="left:1070px;top:823.5px;width:383px;height:31px;background:#5f5f61"></div>
  <div class="t" style="left:1076.5px;top:828px;font-size:14px;color:#f2f2f2">Play This Section Only</div>
  <svg style="left:1412px;top:834px" width="9" height="9" viewBox="0 0 9 9"><path d="M1 1L8 8M8 1L1 8" stroke="#4a4a4c" stroke-width="1.3"/></svg>
  <svg style="left:1432px;top:836px" width="10" height="6" viewBox="0 0 10 6"><path d="M0 0H10L5 5.5Z" fill="#38383a"/></svg>
 </div>
</div>
</body></html>
